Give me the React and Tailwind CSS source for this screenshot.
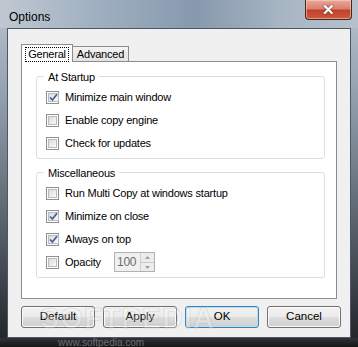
import React from "react";

function Check({ checked, label }) {
  return (
    <div className="flex items-center h-[23px]">
      <div className="w-[13px] h-[13px] border border-[#8e8f8f] bg-white p-[1px] flex">
        <div className="flex-1 border border-[#b7bcc2] bg-gradient-to-br from-[#dcdcdc] to-[#f9f9f9] flex items-center justify-center">
          {checked && (
            <svg width="9" height="9" viewBox="0 0 9 9">
              <path d="M1 4.5 L3.4 7 L8 1.2" fill="none" stroke="#4a5e96" strokeWidth="1.8" />
            </svg>
          )}
        </div>
      </div>
      <span className="ml-[6px] text-black">{label}</span>
    </div>
  );
}

function Btn({ children, primary }) {
  return (
    <button
      className={`h-[22px] rounded-[3px] border ${
        primary ? "border-[#3c7fb1] shadow-[inset_0_0_0_1px_#b6e0f7]" : "border-[#707070] shadow-[inset_0_0_0_1px_#fbfbfb]"
      } bg-[linear-gradient(#f2f2f2_0%,#ebebeb_50%,#dddddd_50%,#cfcfcf_100%)] text-black text-center`}
      style={{ width: 74 }}
    >
      {children}
    </button>
  );
}

export default function App() {
  return (
    <div
      className="relative w-[358px] h-[347px] overflow-hidden flex flex-col bg-[linear-gradient(180deg,#b9c4cf_0%,#8f9caa_30%,#505861_70%,#1f2226_100%)] text-[11px] tracking-[-0.2px]"
      style={{ fontFamily: '"Liberation Sans", Arial, sans-serif' }}
    >
      {/* title bar */}
      <div className="h-[28px] flex items-start bg-[linear-gradient(90deg,#bfc8d2_0%,#9cadbf_30%,#8799ad_55%,#a9b7c5_80%,#b5c0cb_100%)]">
        <span className="ml-[9px] mt-[8px] text-[12px] tracking-normal text-black">Options</span>
        <div className="ml-auto mr-[6px] w-[47px] h-[20px] rounded-b-[4px] border border-t-0 border-[#4a2420] bg-[linear-gradient(#e9a99a_0%,#d9826f_45%,#c3412b_55%,#c95a3c_100%)] flex items-center justify-center shadow-[inset_0_0_0_1px_rgba(255,220,210,0.5)]">
          <span className="text-white text-[15px] font-bold leading-none [text-shadow:0_0_2px_#3a1510]">✕</span>
        </div>
      </div>

      {/* client */}
      <div className="mx-[7px] h-[312px] border border-[#4d5865] bg-[#f0f0f0] pt-[14px] pl-[13px]">
        <div className="flex items-end h-[18px]">
          <div className="relative z-10 -mb-[1px] h-[18px] w-[52px] bg-white border border-b-0 border-[#898c95] flex items-start justify-center pt-[2px]">
            <span className="border border-dotted border-black px-[2px] leading-[13px]">General</span>
          </div>
          <div className="h-[15px] w-[57px] -ml-[1px] border border-b-0 border-[#898c95] bg-[linear-gradient(#f3f3f3,#e3e3e3)] flex items-center justify-center">
            Advanced
          </div>
        </div>
        <div className="w-[316px] h-[238px] bg-white border border-[#898c95] pt-[8px] pl-[14px]">
          <fieldset className="w-[289px] border border-[#d5dfe5] rounded-[3px] px-[9px] pb-[3px]">
            <legend className="-ml-[2px] px-[4px] leading-[14px]">At Startup</legend>
            <div className="pt-[2px]">
              <Check checked label="Minimize main window" />
              <Check label="Enable copy engine" />
              <Check label="Check for updates" />
            </div>
          </fieldset>
          <fieldset className="mt-[7px] w-[289px] border border-[#d5dfe5] rounded-[3px] px-[9px] pb-[3px]">
            <legend className="-ml-[2px] px-[4px] leading-[14px]">Miscellaneous</legend>
            <div className="pt-[2px]">
              <Check label="Run Multi Copy at windows startup" />
              <Check checked label="Minimize on close" />
              <Check checked label="Always on top" />
              <div className="flex items-center">
                <Check label="Opacity" />
                <div className="ml-[13px] w-[41px] h-[20px] border border-[#adb2b5] bg-[#f0f0f0] flex">
                  <span className="flex-1 pl-[2px] leading-[18px] text-[12px] text-[#6d6d6d]">100</span>
                  <div className="w-[14px] flex flex-col border-l border-[#d0d0d0]">
                    <div className="flex-1 flex items-center justify-center border-b border-[#c9c9c9] bg-[#ececec]">
                      <svg width="5" height="3" viewBox="0 0 5 3"><path d="M0 3 L2.5 0 L5 3Z" fill="#a0a0a0" /></svg>
                    </div>
                    <div className="flex-1 flex items-center justify-center bg-[#ececec]">
                      <svg width="5" height="3" viewBox="0 0 5 3"><path d="M0 0 L2.5 3 L5 0Z" fill="#a0a0a0" /></svg>
                    </div>
                  </div>
                </div>
              </div>
            </div>
          </fieldset>
        </div>
        <div className="mt-[7px] flex gap-[8px] text-[11.5px] tracking-normal">
          <Btn>Default</Btn>
          <Btn>Apply</Btn>
          <Btn primary>OK</Btn>
          <Btn>Cancel</Btn>
        </div>
      </div>

      {/* bottom frame */}
      <div className="flex-1 bg-[linear-gradient(#2e3236,#141517)] pl-[58px] leading-[8px]">
        <span className="text-[10px] leading-[8px] text-[#6a6f74] tracking-normal">www.softpedia.com</span>
      </div>

      {/* watermark */}
      <div className="absolute left-[40px] top-[304px] text-[29px] leading-none font-bold tracking-[1px] text-white/25 [-webkit-text-stroke:1px_rgba(160,160,160,0.25)] pointer-events-none">
        SOFTPEDIA
      </div>
    </div>
  );
}
